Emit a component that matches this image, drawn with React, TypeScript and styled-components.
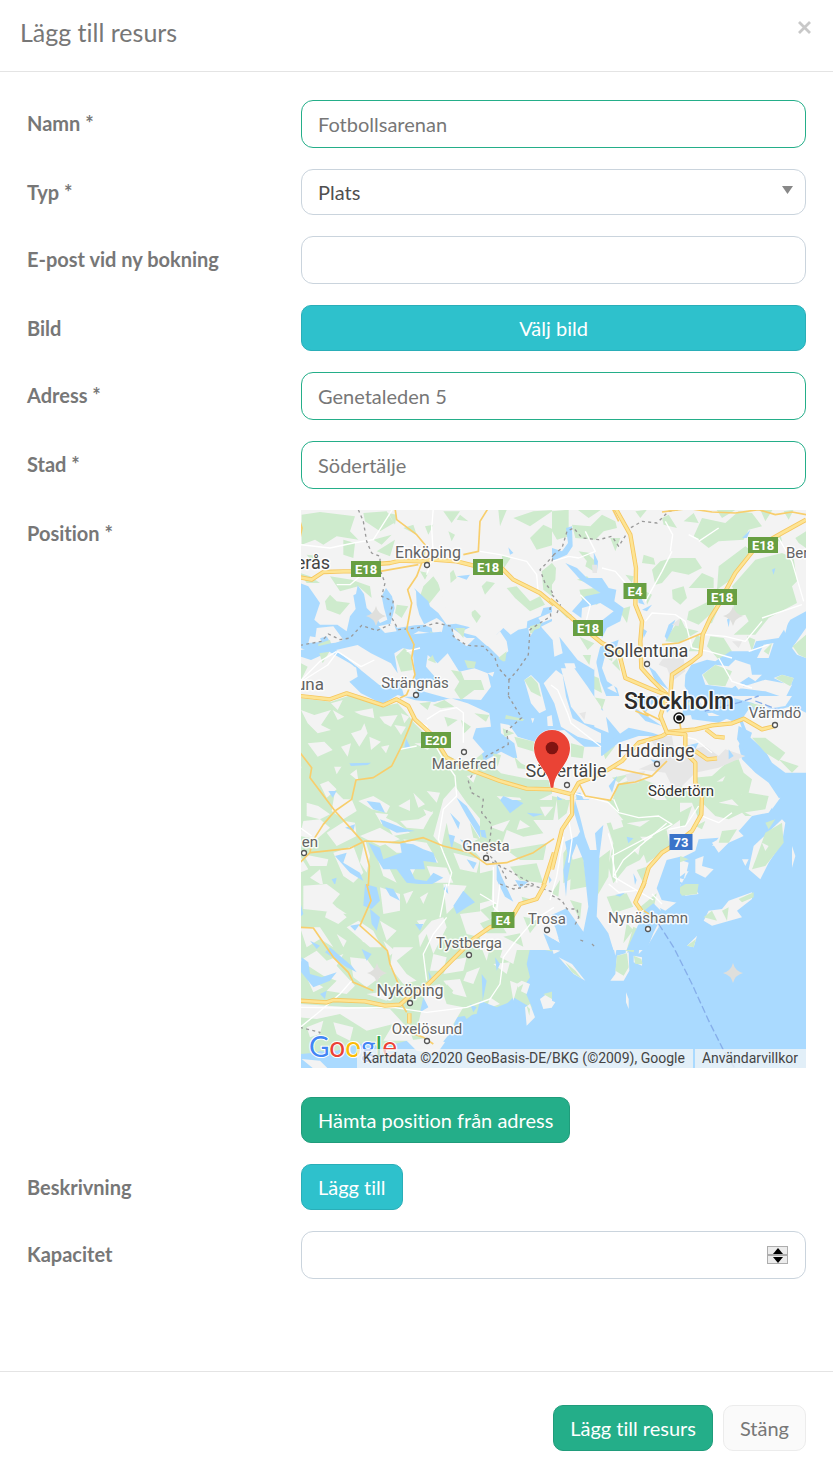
import React, { useState } from 'react';
import styled, { createGlobalStyle, css } from 'styled-components';

const GlobalStyle = createGlobalStyle`
  *, *::before, *::after { box-sizing: border-box; }
  body {
    margin: 0;
    background: #fff;
    color: #777;
    font-family: Lato, "Liberation Sans", sans-serif;
    font-size: 20px;
    font-variant-ligatures: none;
    line-height: 28px;
  }
`;

const Dialog = styled.form`
  display: flex;
  flex-direction: column;
  background: #fff;
`;

const Header = styled.header`
  display: flex;
  justify-content: space-between;
  align-items: flex-start;
  height: 72px;
  padding: 16px 20px;
  border-bottom: 1px solid #e4e4e4;
`;

const Title = styled.h1`
  margin: 0;
  font-size: 25px;
  font-weight: 400;
  line-height: 32px;
`;

const CloseButton = styled.button`
  display: flex;
  padding: 4px 0;
  border: 0;
  background: none;
  color: #c8c8c8;
  cursor: pointer;
`;

const Body = styled.div`
  display: flex;
  flex-direction: column;
  gap: 21px;
  padding: 28px 27px 92px;
`;

const Row = styled.div`
  display: grid;
  grid-template-columns: minmax(0, 274fr) minmax(0, 505fr);
  align-items: start;
`;

const labelText = css`
  padding-top: 9px;
  font-weight: 700;
`;

const Label = styled.label`
  ${labelText}
`;

const Caption = styled.span`
  ${labelText}
`;

const Control = styled.div`
  position: relative;
  display: flex;
  flex-direction: column;
  align-items: flex-start;
`;

const field = css`
  width: 100%;
  padding: 0 16px 1px;
  border-radius: 12px;
  background: #fff;
  font: inherit;
  font-variant-ligatures: none;
  outline: 0;
`;

const TextInput = styled.input<{ $valid?: boolean }>`
  ${field}
  height: 48px;
  border: 1px solid ${(p) => (p.$valid ? '#24ae89' : '#cad4dd')};
  color: #777;
  appearance: textfield;
  &::-webkit-inner-spin-button { appearance: none; }
`;

const Select = styled.select`
  ${field}
  height: 46px;
  border: 1px solid #cad4dd;
  color: #505050;
  appearance: none;
`;

const SelectArrow = styled.svg`
  position: absolute;
  top: 17px;
  right: 13px;
  pointer-events: none;
`;

const tones = {
  green: { background: '#24ae89', border: '#209c7b', color: '#fff' },
  cyan: { background: '#2ec1cc', border: '#2aaeb8', color: '#fff' },
  plain: { background: '#fafafa', border: '#ececec', color: '#777' },
};

const Button = styled.button<{ $tone: keyof typeof tones; $block?: boolean }>`
  width: ${(p) => (p.$block ? '100%' : 'auto')};
  height: 46px;
  padding: 0 16px 1px;
  border: 1px solid ${(p) => tones[p.$tone].border};
  border-radius: 10px;
  background: ${(p) => tones[p.$tone].background};
  color: ${(p) => tones[p.$tone].color};
  font: inherit;
  font-variant-ligatures: none;
  white-space: nowrap;
  cursor: pointer;
`;

const Stepper = styled.div`
  position: absolute;
  top: 15px;
  right: 18px;
  display: flex;
  flex-direction: column;
  width: 21px;
`;

const StepButton = styled.button`
  display: flex;
  justify-content: center;
  align-items: center;
  height: 9px;
  padding: 0;
  border: 1px solid #adadad;
  background: #ececec;
`;

const Footer = styled.footer`
  display: flex;
  justify-content: flex-end;
  gap: 10px;
  padding: 33px 27px 23px;
  border-top: 1px solid #e4e4e4;
`;

const MapFrame = styled.div`
  position: relative;
  width: 100%;
  height: 558px;
  margin-bottom: 29px;
  overflow: hidden;
  background: #aadaff;
`;

const MapCanvas = styled.svg`
  display: block;
  width: 100%;
  height: 100%;
  font-family: Roboto, sans-serif;
`;

const Attribution = styled.div`
  position: absolute;
  right: 0;
  bottom: 0;
  display: flex;
  gap: 2px;
  color: #444;
  font-family: Roboto, sans-serif;
  font-size: 14px;
  line-height: 19px;
  white-space: nowrap;
`;

const Credit = styled.span`
  padding: 0 8px 0 6px;
  background: rgba(245, 245, 245, 0.74);
`;

const TermsLink = styled.a`
  padding: 0 8px 0 7px;
  background: rgba(245, 245, 245, 0.74);
  color: inherit;
  text-decoration: none;
`;

/* ---- Map geometry: every sheet is drawn in units of a third of a pixel ---- */

type Kind = 'water' | 'land' | 'green' | 'urban';
type Line = 'major' | 'minor' | 'street' | 'border' | 'ferry';
interface Sheet {
  x: number;
  y: number;
  areas: [Kind, string][];
  lines: [Line, string][];
}

const fills: Record<Kind, string> = {
  water: '#aadaff',
  land: '#f3f3f3',
  green: '#ceebcd',
  urban: '#e6e6e6',
};

const sheets: Sheet[] = [
  {
    x: -1,
    y: -2,
    areas: [
      ['land', 'M0 0H762V575H0z'],
      ['green', 'M5 20 60 12 165 25 150 70 175 95 110 85 70 110 45 95 5 110z M190 15 260 10 282 45 240 70 195 40z M130 95 165 105 160 150 130 140z M230 130 285 95 270 145z M220 95 275 80 245 110z M265 15 290 20 285 50z M430 10 480 10 455 45z M375 55 400 50 385 80z M445 70 465 80 455 100z M480 20 505 40 470 35z M595 6 620 6 600 55z M640 30 700 10 762 6 690 55z M690 90 730 50 762 65 762 110 710 125z M605 140 632 150 612 180z M545 235 560 220 585 225 555 260z M510 315 525 305 543 325 530 345z M450 195 460 185 470 210 452 225z M360 190 385 195 375 215z M370 235 400 205 425 240 385 290 355 280z M440 240 460 250 455 275z M290 290 325 295 305 330 285 315z M90 205 155 215 210 235 215 270 175 235 120 250z M0 195 30 205 60 225 20 225z M75 280 90 260 110 280 150 285 120 320 80 305z M620 240 650 235 690 280 720 265 735 290 690 310 645 270z M725 190 762 160 762 270 730 245z M20 140 60 145 40 165z M310 60 340 50 350 80z'],
      ['water', 'M0 225 25 235 60 285 43 335 60 350 112 350 140 370 150 325 167 303 160 262 168 258 173 232 192 258 200 300 225 325 240 345 262 335 252 300 245 265 258 240 276 265 284 300 272 345 293 360 345 352 373 350 358 320 350 290 348 250 342 240 385 280 390 295 415 315 440 350 468 347 510 358 480 372 527 384 560 413 590 420 598 400 590 380 610 360 632 380 655 365 680 360 682 340 722 323 730 300 762 295 768 575 620 575 250 575 200 500 60 440 0 420z M470 205 510 200 500 215z M625 118 640 135 630 140z'],
      ['land', 'M50 360 100 355 130 395 95 410 80 385 45 395z M30 385 60 390 65 402 25 405z M235 355 280 345 290 370 255 375z M330 385 355 370 390 375 395 410 380 435 350 430z M370 350 410 330 432 345 420 395 400 390 395 360z M455 360 500 390 525 390 500 415 465 390z M410 210 455 230 500 265 515 310 515 340 480 340 440 310z M685 360 720 355 715 375 690 395z M715 330 762 310 762 330 725 345z M600 370 620 400 625 430 600 450 560 410z'],
      ['green', 'M55 408 90 395 98 430 55 440z M130 405 160 400 155 420z M390 370 415 380 400 400z M465 360 495 360 490 390z M595 450 620 430 615 465z M690 355 725 345 710 380 690 375z'],
    ],
    lines: [
      ['border', 'M175 5 190 40 200 100 215 135 240 145 240 185 255 225 245 265 280 280 270 320 295 365 350 360 410 345 455 355 460 385 500 412 550 415 585 450 595 480 627 515 650 490 685 440 690 365 720 345 752 325 750 300 762 295'],
      ['border', 'M0 412 65 400 85 378 120 395 150 390 185 352 230 368 270 350'],
      ['border', 'M762 140 740 165 720 185 735 225 755 250 762 265 M627 515 625 570'],
      ['street', 'M0 110 90 120 160 105 220 95 280 0 M400 0 395 60 400 140 380 200 M540 130 600 140 680 160 710 200 715 260 M240 190 180 205 150 230 110 230 M320 430 360 420 M110 430 60 460 0 520'],
      ['minor', 'M285 0 290 35 350 80 375 110 372 150 M565 0 540 40 535 130 490 140 M240 190 355 170 M365 165 350 205 323 245 335 285 320 365 342 410 335 450 345 500 320 560 300 570 M0 90 6 60 0 40'],
      ['major', 'M0 208 35 215 70 192 130 190 170 190 230 168 270 165 300 158 360 160 400 155 470 160 530 175 600 175 640 215 720 255 762 290'],
    ],
  },
  {
    x: 251,
    y: -2,
    areas: [
      ['land', 'M0 0H768V575H0z'],
      ['green', 'M0 10 50 5 50 85 15 95 0 70z M60 50 115 55 150 20 190 40 195 60 155 70 130 95 70 90z M70 0 155 0 110 30z M175 90 205 90 190 130z M0 165 12 180 10 215 0 230z M80 130 115 135 105 160z M110 140 130 160 125 190 100 175z M75 215 105 205 140 240 110 225z M220 200 245 205 240 225z M82 245 130 240 155 265 135 290 90 275z M330 30 350 20 375 60 335 50z M395 40 425 15 440 45z M250 10 285 5 265 30z M425 85 450 30 520 45 560 10 600 15 630 55 590 65 575 95 500 100 470 120z M490 0 560 0 510 30z M625 5 665 0 640 40z M275 140 305 150 310 170 270 165z M300 185 325 160 360 150 430 150 450 180 410 200 360 190 330 225 310 230z M410 240 450 195 485 210 485 240z M360 245 395 235 405 270 385 290 362 272z M280 250 300 260 285 290z M500 175 580 115 600 130 530 220 495 245z M540 235 610 155 690 135 725 150 735 220 720 235 735 285 650 330 610 380 545 380 590 340 580 320 540 330 550 260z M410 310 450 290 490 270 485 310 440 350 405 335z M350 380 385 330 400 360 440 370 380 405 340 400z M410 430 435 380 450 390 450 430z M460 350 500 300 480 345z M475 385 515 390 540 430 500 455 465 415z M200 305 235 295 225 345z M20 305 60 320 45 330z M50 500 80 490 78 510z M585 385 610 395 600 430z M695 10 725 5 710 35z M730 90 762 70 762 120 740 105z M660 100 685 75 690 100z'],
      ['water', 'M0 120 30 130 48 105 42 60 60 55 62 115 45 140 0 160z M125 133 138 160 135 190 128 195z M40 165 75 180 105 210 150 210 170 240 193 245 187 280 215 300 205 340 165 360 150 390 140 345 185 310 145 285 90 300 88 330 60 310 100 265 145 255 115 235 85 215z M255 245 278 290 260 285z M270 305 300 290 285 310z M350 350 370 335 360 365 345 395 338 385z M570 90 595 65 585 90z M525 335 535 325 530 358z M0 370 35 370 60 410 80 385 100 420 120 405 135 420 200 395 190 435 160 440 150 480 165 520 195 540 205 575 0 575z M290 475 310 490 350 545 310 520z M398 535 400 500 418 470 465 455 490 460 535 430 600 430 612 400 680 390 715 335 762 310 768 575 420 575z M270 360 285 370 275 390z M660 185 670 180 665 200z'],
      ['land', 'M95 470 130 450 145 520 165 570 110 570 90 520z M165 540 185 530 195 555z M450 500 490 470 530 475 550 455 595 470 600 500 540 540 460 530z M560 540 640 515 720 530 700 570 640 550z M665 510 690 500 725 510 715 535z M635 410 665 405 650 450 615 450z M690 350 710 335 700 375z M720 420 762 360 762 450 735 440z M580 500 630 500 610 520z M540 520 580 530 560 545z'],
      ['green', 'M452 500 490 470 540 490 520 535 470 530z M670 510 690 500 725 510 715 535z M722 415 762 380 762 450 740 440z M115 500 140 510 150 555 120 540z M180 465 195 450 205 490z M165 450 185 430 180 460z M635 430 660 405 650 440z'],
      ['urban', 'M320 470 355 420 395 450 400 490 360 520 345 480z M540 400 570 400 560 420z M360 350 385 330 380 355z M120 170 135 170 135 195 122 195z'],
    ],
    lines: [
      ['street', 'M0 160 50 145 80 150 130 130 100 70 M150 180 190 190 220 225 M360 130 330 190 280 280 M280 340 300 315 370 320 400 340 420 420 470 430 540 450 M340 40 362 80 355 130 M410 80 440 95 M680 90 720 160 755 280 M630 330 750 290 M590 430 650 410 M100 350 115 290 85 260 M460 380 520 385 580 400 630 340 M440 100 500 60 M600 540 540 520 500 450'],
      ['border', 'M0 160 5 140 30 120 45 70 65 60 90 90 140 95 180 85 200 115 235 60 270 40 315 45 350 10 400 0 M0 260 25 290 15 315'],
      ['minor', 'M180 0 200 40 M330 12 420 0 M400 0 480 12 550 15 620 5 670 20 720 12 762 20 M330 410 380 405 452 375'],
      ['major', 'M190 0 235 80 252 180 250 290 270 340 265 400 268 480 300 515 345 560'],
      ['major', 'M-6 275 30 305 70 340 100 365 150 405 200 430 220 510 290 540 345 562'],
      ['major', 'M762 35 690 75 610 120 550 195 520 250 500 290 475 330 452 380 445 440 420 460 360 500 355 565'],
    ],
  },
  {
    x: -1,
    y: 186,
    areas: [
      ['green', 'M0 0H768V575H0z'],
      ['land', 'M0 10 60 15 150 5 270 30 340 60 450 0 560 30 550 100 540 160 505 145 480 200 440 180 400 120 340 70 290 40 250 50 180 20 120 40 70 20 20 40z M30 125 75 120 95 150 50 160z M145 155 190 140 205 175 165 190z M205 110 230 130 215 150z M265 190 275 130 290 150 280 180z M65 185 90 175 80 200z M100 205 135 195 110 235z M150 235 170 220 175 255z M120 190 140 170 140 195z M330 140 420 140 400 165 370 150z M60 265 85 255 110 280 80 305z M105 285 130 310 155 310 170 345 130 370 95 345z M20 320 55 330 90 355 60 370 20 360z M0 175 10 190 0 230z M175 315 220 300 270 330 260 350 215 340z M225 350 265 355 245 385z M380 285 420 290 410 320z M340 290 375 325 355 335z M295 330 330 310 330 345z M370 340 400 350 385 370z M300 375 355 370 400 345 370 400 320 395z M400 420 430 310 465 270 500 320 550 380 555 420 490 450 450 430 440 380 425 450z M245 360 290 380 330 410 280 420z M180 420 240 395 300 430 240 450z M10 375 60 370 90 395 50 430 0 420z M80 410 135 375 165 380 170 420 110 450z M195 430 210 480 200 530 180 500z M10 475 85 490 80 510 30 510z M100 470 160 450 190 530 160 560 130 540z M0 480 25 520 0 530z M250 440 310 445 340 470 290 470z M310 430 380 440 415 500 350 490z M230 480 260 500 290 560 250 540z M320 490 350 510 330 550z M380 510 440 515 460 560 400 560z M460 470 540 490 530 530 480 520z M500 440 620 430 640 460 590 510 545 490z M560 510 620 500 640 545 700 540 720 500 740 570 560 570z M610 330 640 340 600 370z M560 180 620 190 650 150 720 160 762 170 762 230 690 225 640 215z M590 300 660 305 680 335 640 350z M640 350 700 330 690 370z M700 320 762 290 762 320z M655 375 710 370 690 400z M700 425 762 390 762 425 720 450z M640 400 650 430 620 415z M700 455 762 440 720 480z M30 545 60 520 70 570z M120 395 140 390 130 410z M460 350 500 360 480 410z M500 240 530 235 520 260z'],
      ['water', 'M540 0 540 30 570 50 575 90 600 110 610 150 590 170 605 180 660 140 690 150 705 120 762 60 762 0z M545 160 600 190 640 200 590 210 550 195z M85 285 110 285 98 305z M150 205 215 200 205 208 160 210z M325 105 322 155 315 140z M200 315 240 320 255 350 220 340z M240 370 320 400 345 405 290 410 250 390z M470 305 500 330 545 400 560 440 540 425 500 360z M450 350 480 380 475 400z M445 415 465 420 455 460z M575 345 610 300 680 330 640 335 600 320 590 345 650 350 620 370z M205 440 240 455 250 490 305 470 300 440 340 445 370 460 400 470 410 500 370 495 375 520 330 520 345 550 380 555 400 530 430 545 390 568 320 560 290 520 250 520 225 480z M105 480 140 470 130 500 180 530 190 555 150 530z M135 395 165 385 160 405z M95 550 110 545 105 568z M480 430 505 440 500 460z M500 490 530 500 520 520z M670 345 690 345 680 365z M745 280 762 275 762 295z'],
      ['green', 'M550 190 600 215 580 225z M510 380 540 430 520 425z M680 175 720 180 700 210z'],
    ],
    lines: [
      ['street', 'M345 70 380 90 390 120 430 190 465 240 470 300 430 340 415 430 430 470 455 530 445 570 M300 160 350 150 M380 70 420 45 470 35 490 50 490 140 M0 395 35 420'],
      ['border', 'M625 0 665 65 620 105 625 145 560 180 525 225 505 255 515 290 550 310 545 350 575 385 570 430 560 470 600 510 620 550 M560 490 620 520 700 565 640 568'],
      ['minor', 'M0 170 35 215 30 245 105 345 155 310 168 252 220 245 275 210 305 150 330 90 340 60 M105 345 70 385 35 440 30 470 60 467 150 457 195 435 300 440 370 425 430 450 510 470 560 505 620 500 700 470 762 428 M105 345 155 400 190 440 208 510 205 570 M30 470 0 500'],
      ['major', 'M0 0 90 10 140 -8 250 28 290 10 325 30 345 70 400 120 440 185 520 225 600 255 680 278 762 280'],
      ['major', 'M762 470 730 570'],
    ],
  },
  {
    x: 251,
    y: 186,
    areas: [
      ['water', 'M0 0H768V575H0z'],
      ['land', 'M0 100 40 100 110 170 180 160 210 120 160 60 140 10 100 0 240 0 280 50 320 0 400 0 390 60 480 50 540 75 560 70 575 110 560 150 570 190 610 230 650 260 680 305 650 350 600 360 565 400 520 440 480 450 500 425 440 430 430 465 380 490 410 500 400 545 360 545 330 575 150 575 140 510 145 440 130 380 140 340 110 310 70 310 95 370 85 420 60 520 65 575 0 575z M20 0 100 0 160 50 170 110 120 90z M570 70 590 40 650 50 720 30 762 50 762 230 700 230 660 200 640 165 590 120z M520 0 720 0 700 30 640 40 600 20z M440 10 500 20 460 50z M690 370 700 380 690 440 650 500 625 550 590 520 605 450z M720 450 730 480 720 515z M480 440 555 400 575 420 530 440 500 470z M430 490 455 480 450 510 485 520 460 545 430 530z M355 540 410 525 390 560z M665 310 685 305 660 340z M570 490 590 490 580 510z M540 200 560 185 570 220z M250 60 320 65 300 90 240 90z'],
      ['green', 'M195 265 260 245 310 265 290 300 350 330 345 370 420 330 400 390 350 410 330 380 300 450 270 470 265 520 230 560 225 500 160 480 150 440 130 390 180 370 140 340 180 320z M380 250 480 240 530 195 560 190 575 230 600 250 590 290 650 300 640 340 570 350 530 370 490 360 450 320 440 370 420 320 350 320 330 290z M600 125 640 125 700 170 680 195 640 170z M680 190 740 210 720 230z M0 300 40 310 40 350 0 400z M70 300 100 340 160 370 115 390 90 360z M690 380 695 440 640 510 600 520 615 480 640 410z M510 405 555 400 530 440 500 440z M30 160 70 150 65 180 30 175z M150 160 190 150 160 190z M180 245 230 235 200 260z M100 0 160 10 150 40z M400 20 440 15 430 40z M430 390 460 375 450 400z M385 480 410 490 380 500z M590 20 640 30 610 40z M640 380 670 370 650 400z M560 340 600 360 580 360z'],
      ['land', 'M195 345 230 325 215 350z M260 330 290 310 275 350z M380 260 420 230 440 300 410 290z M550 280 570 295 550 305z M490 260 520 240 510 260z M580 210 600 220 590 235z M500 320 540 310 560 330z M630 440 650 450 640 465z'],
      ['urban', 'M260 220 350 180 460 150 500 180 520 160 580 180 500 215 430 230 370 290 340 230z M290 120 360 120 370 180 320 170z M220 235 280 225 260 260 230 265z'],
      ['water', 'M120 165 150 140 180 130 230 95 300 110 330 120 260 120 200 140 150 180z M230 20 270 50 330 90 280 75z M340 30 355 40 345 50z M415 50 460 40 470 60 540 60 500 80 420 70z M560 90 600 110 580 170 555 130z M295 190 325 195 310 205z M400 150 440 140 430 160z M170 270 195 240 180 290z M15 300 30 310 20 340z M40 180 80 190 60 200z M640 30 700 50 690 60z M380 545 400 530 395 550z M530 160 545 180 530 190z M70 290 85 290 110 340 80 330z'],
      ['green', 'M460 258 550 255 580 280 560 310 500 300 450 290z'],
    ],
    lines: [
      ['street', 'M60 290 170 320 200 350 260 365 320 360 360 385 180 480 195 560 M200 345 185 310 M440 330 400 390 350 400 M60 300 50 370 60 430 50 500 M390 180 350 160 M450 360 500 380 540 350 M390 120 430 130 480 170'],
      ['ferry', 'M415 0 460 45 560 20 620 0 M610 15 700 50 740 35'],
      ['minor', 'M240 0 280 50 330 75 M180 215 300 240 250 258 200 265 175 313 100 300 80 260 M300 240 345 195 M390 120 380 60 M290 60 250 45'],
      ['major', 'M0 280 60 295 80 260 120 245 170 220 210 195 260 140 330 120 350 108 430 100 480 88 540 82 575 68 630 100 670 90'],
      ['major', 'M345 0 325 60 345 110 400 115 400 170 430 200 430 260 450 300 448 355 420 405 370 445 330 470 290 515 272 575'],
      ['major', 'M462 100 490 122 518 125 M430 165 465 190 495 187'],
      ['major', 'M60 295 60 355 30 400 0 520'],
    ],
  },
  {
    x: -1,
    y: 374,
    areas: [
      ['green', 'M0 0H762V370L700 375 640 340 610 370 560 385 470 400 450 460 390 500 320 470 250 490 180 480 110 500 0 510z'],
      ['land', 'M10 5 80 0 120 30 95 60 140 90 60 80 10 75z M90 50 140 100 115 120 75 100z M0 130 60 130 100 190 60 165 20 190z M140 130 175 110 220 140 245 190 210 190z M110 150 140 170 130 190z M0 230 50 200 80 230 130 210 110 245 165 305 140 330 80 320 110 290 70 275z M0 360 150 370 270 375 330 440 340 470 250 470 280 420 200 440 120 390 50 405 0 400z M280 190 340 190 290 230 320 270 350 290 310 300 270 250z M150 220 200 225 240 280 200 310 160 280z M240 10 300 30 300 80 250 90z M240 110 290 140 260 170z M355 155 395 110 430 100 440 130 400 210 380 150 360 190z M350 110 380 105 365 130z M430 0 500 5 470 60 440 90z M480 90 555 80 580 30 550 10 640 0 640 70 590 100 540 160 500 150z M360 40 385 25 370 60z M310 30 340 20 320 60z M400 210 440 220 430 260 390 260z M450 230 500 220 490 260 430 270z M430 290 480 285 500 340 460 330z M380 310 420 300 440 360 490 370 460 420 490 470 410 510 350 440z M540 180 570 190 560 230z M590 150 640 130 690 150 620 200z M650 100 720 60 762 90 762 170 690 160z M610 190 655 180 640 240 600 220z M580 240 630 235 620 270z M630 290 655 300 640 350z M570 340 600 360 560 375z M20 430 70 410 60 450 30 460z M100 415 160 430 150 470 110 450z M170 150 210 160 190 175z M250 170 285 200 270 215z M500 265 540 250 520 300 490 290z M200 330 270 320 260 350z M20 280 70 310 40 325z M60 30 90 20 70 55z M680 20 762 30 762 60 720 80 640 60z'],
      ['water', 'M695 170 720 195 768 205 768 575 330 575 300 520 270 480 330 490 400 510 440 460 490 410 530 390 540 350 590 370 640 350 655 370 700 380 670 310 690 280 680 240z M5 220 25 235 30 270 65 280 110 265 90 290 40 310 0 260z M75 205 90 190 155 245 170 265 140 250z M195 0 230 10 240 50 215 75 190 65z M210 75 240 100 230 140 215 120z M255 10 280 15 300 50 270 35z M460 65 490 20 525 55 500 70 470 90z M345 120 370 120 360 140z M430 15 440 0 445 30z M590 20 605 40 600 60z M150 125 180 120 165 140z M185 195 215 210 200 230z M0 540 60 500 130 520 230 540 230 575 0 575z M585 220 600 240 590 260z M545 270 560 290 548 350z M370 340 385 370 360 385z M385 260 400 290 390 300z M510 360 530 370 520 385z M0 50 10 90 0 100z M30 170 60 185 50 195z M60 330 80 320 75 345z'],
      ['land', 'M650 300 665 290 690 300 680 330 660 320z M675 370 690 360 705 400 680 425z M720 345 740 330 765 345 765 370 730 375z M320 470 400 460 435 475 410 510 350 500z M5 525 60 530 100 570 60 570z'],
      ['green', 'M730 330 765 320 765 350z M680 365 690 375 688 395z M440 300 460 320 445 340z M655 310 670 300 660 330z M490 390 520 390 500 405z'],
    ],
    lines: [
      ['street', 'M0 370 140 372 280 370 380 385 500 370 570 345 600 300 610 220 640 180 700 110 762 70 M380 290 370 210 400 150 440 100 M155 290 120 330 50 390 0 430 M440 0 420 100 M600 0 590 80 M590 60 540 30'],
      ['border', 'M0 430 60 445 40 470 M600 0 640 15 700 5 762 25'],
      ['minor', 'M0 130 40 132 100 220 145 265 160 295 220 320 M200 0 213 50 180 125 225 165 262 200 270 240 295 300 M305 360 320 385 M325 445 370 460 400 480'],
      ['major', 'M0 350 80 355 100 348 195 352 255 365 300 362 330 335 385 300 450 235 520 165 570 130 630 110 660 60 710 45 735 0'],
      ['major', 'M328 388 328 418'],
    ],
  },
  {
    x: 251,
    y: 374,
    areas: [
      ['water', 'M0 0H768V575H0z'],
      ['land', 'M0 0 95 0 105 60 80 95 95 140 50 100 30 0 0 40z M0 50 40 60 45 90 0 110z M0 130 40 130 40 160 0 165z M150 0 385 0 380 50 340 80 320 70 320 130 290 180 260 210 270 120 245 170 220 215 225 170 205 130 190 215 180 170 160 180 150 120 130 85 150 40z M390 20 420 0 440 30 400 35z M195 215 230 205 232 260 215 290 175 290 190 270z M245 215 270 220 270 245 245 235z M290 170 310 125 300 165z M20 220 60 240 100 290 65 270z M222 325 230 345 230 375 222 355z M0 195 25 200 5 210z M455 110 470 80 510 75 530 50 600 25 600 45 555 80 570 100 480 125z M405 185 435 155 425 190z M0 350 10 355 0 370z'],
      ['green', 'M65 30 90 15 102 60 75 90z M150 30 190 15 215 70 190 100 145 60z M225 120 260 120 245 205 220 200z M195 215 225 208 230 250 215 275 190 260z M158 130 172 150 165 175z M245 215 268 225 272 240 250 240z M40 235 70 260 90 285 60 265z M455 100 480 80 495 110z M510 80 530 70 525 110z M560 45 605 25 605 40 570 55z M405 185 432 165 425 190z M375 15 400 0 440 0 435 30 390 35z M205 70 240 70 230 85z M290 30 310 15 305 50z M0 0 20 0 10 20z'],
      ['urban', 'M320 110 335 115 322 128 312 118z'],
    ],
    lines: [
      ['street', 'M170 0 200 25 250 20 M300 30 330 60'],
      ['border', 'M0 35 30 50 45 75 75 75 80 100 65 130 M85 168 95 172 M120 180 130 190'],
      ['ferry', 'M320 120 365 190 420 300 470 410 515 500 550 555'],
      ['major', 'M278 -6 250 55 268 80'],
      ['minor', 'M275 80 290 90 300 115'],
    ],
  },
  /* Lake Mälaren between Strängnäs and Södertälje */
  {
    x: 0,
    y: 90,
    areas: [
      ['water', 'M0 150 90 130 250 110 420 95 500 145 560 170 600 185 640 180 700 90 760 70 830 110 880 150 880 400 820 450 700 470 560 480 480 400 200 300 0 300z'],
      ['land', 'M0 170 30 180 85 155 165 200 170 230 145 245 180 280 240 310 0 320z M105 150 170 135 210 160 270 190 300 235 270 260 235 255z M280 160 305 145 335 150 342 230 345 290 310 290 290 220z M380 165 410 190 440 160 475 215 520 205 560 220 570 260 540 300 440 295 370 275 360 250 410 240 375 200z M0 280 170 290 240 315 290 285 340 300 400 305 450 295 500 310 565 340 570 380 525 385 515 415 550 455 520 480 0 480z'],
      ['green', 'M0 295 90 305 150 285 240 320 290 310 325 350 340 370 430 460 500 500 0 500z M285 170 310 145 330 165 335 210 300 215z M380 180 395 165 405 190z M450 210 480 215 490 240 540 240 550 270 520 270 480 300 460 270 475 245z M490 180 525 185 520 205 500 205z M520 340 565 345 555 365z M395 315 430 300 460 320 420 325z M480 360 510 380 490 400z M355 310 390 305 380 330z M55 160 85 155 65 190z M0 190 20 200 0 240z M430 350 470 360 440 380z'],
      ['land', 'M0 330 40 345 90 330 60 375 90 390 50 400 20 370z M90 310 125 300 110 330z M160 335 215 325 220 355 180 345z M235 350 290 345 270 380 250 370z M180 390 190 370 200 400 175 440 150 400z M20 430 70 425 95 450 50 470z M205 410 240 425 210 450z M280 375 315 380 300 405z M95 330 130 350 110 360z M120 440 150 430 140 470z M300 340 325 350 310 370z M340 430 400 430 380 450z M240 440 265 435 255 460z'],
      ['land', 'M555 480 600 455 650 480 640 430 600 400 598 370 625 375 650 410 700 425 740 470 800 440 840 480 840 540 700 540 600 520z M670 240 690 225 715 250 735 330 715 340 690 310z M728 250 765 210 785 225 795 290 815 355 870 385 900 400 900 430 830 410 780 380 760 310z M780 205 820 205 860 260 900 320 900 380 850 370 810 320z M720 80 760 60 900 130 880 210 830 180 775 110 785 160 760 170 755 120z M738 350 752 345 756 378 740 378z M690 355 700 355 695 370z M560 220 580 215 575 230z M790 190 820 190 825 205 795 205z M735 395 790 390 850 440 900 440 900 480 830 470z'],
      ['green', 'M670 240 690 228 710 250 720 290 690 275z M605 385 640 400 610 410z M640 410 700 425 700 455 650 440z M615 345 670 358 665 363 612 356z M835 110 880 130 860 150z M845 165 870 165 865 195z M575 460 600 465 590 500z M640 470 660 490 700 510 650 505z M810 430 850 440 845 475 810 470z'],
      ['water', 'M145 490 210 488 200 495 150 498z M315 415 330 445 310 445z M340 300 400 290 440 295 400 305z M105 152 180 210 160 200z'],
      ['urban', 'M835 340 855 335 850 360z'],
    ],
    lines: [['street', 'M0 245 80 195 110 155 180 200 220 180 M750 255 770 270 800 340 810 370 900 440']],
  },
  /* Coast between Trosa and Nynäshamn */
  {
    x: 179,
    y: 290,
    areas: [
      ['land', 'M0 0H600V180L560 230 530 290 545 340 500 400 460 380 440 450 400 450 380 400 350 350 310 400 260 330 215 350 240 430 190 400 220 450 0 450z'],
      ['green', 'M0 130 0 0H230L220 60 160 60 190 100 130 110 80 90 60 150z M80 150 200 130 190 180 120 180z M90 200 170 190 190 250 120 240z M0 220 40 210 35 300 0 310z M0 330 50 310 30 360z M125 290 160 300 130 310z M250 160 270 130 285 230 250 250z M275 180 310 170 320 260 270 270z M270 300 305 310 300 360z M350 180 390 150 385 230 350 290z M380 0H600V60L530 110 480 180 440 200 400 250 385 200 400 130 380 70 430 60z M480 130 560 90 570 140 500 190z M470 210 500 200 490 250z M380 290 440 280 460 320 400 340z M470 330 530 280 520 330z M440 370 460 390 430 430z M215 280 240 240 235 290z M230 0 270 0 260 40 235 60z M130 350 180 360 150 400z M0 370 50 350 80 400 20 400z M70 410 120 400 130 440z'],
      ['land', 'M390 60 420 50 430 80 400 90z M440 70 510 60 480 80z M480 110 520 110 495 125z M30 80 90 60 70 95z M120 60 150 80 110 90z M460 150 480 140 475 165z M410 260 450 240 440 270z M180 20 220 20 195 50z'],
      ['water', 'M285 0 300 50 315 110 330 150 350 150 345 100 370 75 358 170 355 260 350 350 385 400 400 450 210 450 190 400 240 430 215 345 260 325 310 395 325 320 310 180 285 120 300 95 280 30z M255 125 300 105 275 170 262 240 258 290 250 210 262 160z M50 190 65 230 100 305 75 290 50 240z M105 240 145 245 120 265z M60 0 90 40 130 10 110 0z M0 90 15 90 20 115 5 110z M140 38 190 42 160 50z M560 180 600 170 600 310 545 300 530 265z M440 110 460 115 445 130z M460 220 470 240 465 255z M405 285 435 278 420 290z M495 330 520 310 550 340 520 400 500 450 440 450z M205 225 215 240 208 250z'],
    ],
    lines: [['street', 'M385 100 400 150 400 230 460 265 520 300 M400 230 430 180 560 70 M250 110 230 230 210 300 M40 200 40 320 60 340']],
  },
];

const lineStyles: Record<Line, React.SVGProps<SVGPathElement>> = {
  street: { stroke: '#fff', strokeWidth: 4 },
  border: { stroke: '#9a9a9a', strokeWidth: 4, strokeDasharray: '9 10' },
  ferry: { stroke: '#86aeea', strokeWidth: 4, strokeDasharray: '22 9' },
  minor: { stroke: '#f8ce6c', strokeWidth: 5 },
  major: { stroke: '#f6c75f', strokeWidth: 13 },
};

const lineOrder: Line[] = ['street', 'border', 'ferry', 'minor', 'major'];

interface Place {
  name: string;
  x: number;
  y: number;
  size: number;
  color?: string;
  weight?: number;
  anchor?: 'start' | 'middle' | 'end';
  dot?: [number, number];
}

const places: Place[] = [
  { name: 'Enköping', x: 127, y: 48, size: 16, dot: [126, 55] },
  { name: 'erås', x: 29, y: 59, size: 18, anchor: 'end', color: '#444' },
  { name: 'una', x: 23, y: 180, size: 17, anchor: 'end' },
  { name: 'Strängnäs', x: 114, y: 178, size: 15, dot: [115, 185] },
  { name: 'Mariefred', x: 163, y: 259, size: 15, dot: [163, 242] },
  { name: 'Gnesta', x: 185, y: 341, size: 15, dot: [185, 348] },
  { name: 'en', x: 17, y: 337, size: 15, anchor: 'end', dot: [3, 343] },
  { name: 'Trosa', x: 246, y: 414, size: 15, dot: [246, 420] },
  { name: 'Tystberga', x: 168, y: 438, size: 15, dot: [168, 445] },
  { name: 'Nyköping', x: 109, y: 486, size: 16, dot: [109, 493] },
  { name: 'Oxelösund', x: 126, y: 524, size: 15, dot: [126, 531] },
  { name: 'Nynäshamn', x: 347, y: 413, size: 15, dot: [347, 419] },
  { name: 'Sollentuna', x: 345, y: 147, size: 18, color: '#444', dot: [346, 154] },
  { name: 'Ber', x: 485, y: 48, size: 15, anchor: 'start' },
  { name: 'Värmdö', x: 474, y: 208, size: 15, dot: [474, 215] },
  { name: 'Huddinge', x: 355, y: 247, size: 18, color: '#444', dot: [356, 254] },
  { name: 'Södertälje', x: 265, y: 267, size: 18, color: '#444', dot: [266, 275] },
  { name: 'Södertörn', x: 380, y: 286, size: 15, color: '#333' },
  { name: 'Stockholm', x: 378, y: 199, size: 23, weight: 500, color: '#2c2c2c' },
];

const shields = [
  { name: 'E18', x: 65, y: 59 },
  { name: 'E18', x: 187, y: 57 },
  { name: 'E18', x: 462, y: 35 },
  { name: 'E4', x: 334, y: 81 },
  { name: 'E18', x: 421, y: 87 },
  { name: 'E18', x: 287, y: 118 },
  { name: 'E20', x: 135, y: 230 },
  { name: 'E4', x: 202, y: 410 },
  { name: '73', x: 380, y: 332, color: '#3a73c9' },
];

const sparkles = [
  { x: 75, y: 106 },
  { x: 432, y: 106 },
  { x: 76, y: 463 },
  { x: 432, y: 463 },
];

function PositionMap() {
  return (
    <MapFrame>
      <MapCanvas
        viewBox="0 0 505 558"
        preserveAspectRatio="xMidYMid slice"
        role="img"
        aria-label="Karta med vald position"
      >
        {sheets.map((s) => (
          <g key={`${s.x},${s.y}`} transform={`translate(${s.x} ${s.y}) scale(${1 / 3})`}>
            {s.areas.map(([kind, d], i) => (
              <path key={i} d={d} fill={fills[kind]} />
            ))}
          </g>
        ))}
        {sparkles.map((p) => (
          <path
            key={`${p.x},${p.y}`}
            transform={`translate(${p.x} ${p.y})`}
            d="M0 -10 Q2 -2 10 0 Q2 2 0 10 Q-2 2 -10 0 Q-2 -2 0 -10z"
            fill="#dfdfdc"
          />
        ))}
        {lineOrder.map((kind) =>
          sheets.map((s) => (
            <g
              key={`${kind}${s.x},${s.y}`}
              transform={`translate(${s.x} ${s.y}) scale(${1 / 3})`}
              fill="none"
              strokeLinejoin="round"
            >
              {s.lines
                .filter(([k]) => k === kind)
                .map(([, d], i) => (
                  <g key={i}>
                    <path d={d} {...lineStyles[kind]} />
                    {kind === 'major' && <path d={d} stroke="#fde494" strokeWidth={8} />}
                  </g>
                ))}
            </g>
          )),
        )}
        {shields.map((s) => {
          const w = s.name.length > 2 ? 30 : 23;
          return (
            <g key={`${s.x},${s.y}`}>
              <rect x={s.x - w / 2} y={s.y - 8} width={w} height={16} fill={s.color ?? '#689f42'} />
              <text x={s.x} y={s.y + 5} textAnchor="middle" fontSize={13} fontWeight={700} fill="#fff">
                {s.name}
              </text>
            </g>
          );
        })}
        {places.map((p) => (
          <g key={p.name}>
            {p.dot && (
              <circle cx={p.dot[0]} cy={p.dot[1]} r={2.5} fill="#fff" stroke="#555" strokeWidth={1.3} />
            )}
            <text
              x={p.x}
              y={p.y}
              textAnchor={p.anchor ?? 'middle'}
              fontSize={p.size}
              fontWeight={p.weight ?? 400}
              fill={p.color ?? '#646464'}
              stroke="#fff"
              strokeOpacity={0.85}
              strokeWidth={3}
              strokeLinejoin="round"
              paintOrder="stroke"
            >
              {p.name}
            </text>
          </g>
        ))}
        <circle cx={378} cy={208} r={5} fill="#fff" stroke="#111" strokeWidth={1.5} />
        <circle cx={378} cy={208} r={2.8} fill="#111" />
        <path
          d="M249.500 277C249 262 233 254 233 238A18 18 0 0 1 269 238C269 254 253 262 252.500 277Q251 279 249.500 277z"
          fill="#ea4335"
          stroke="#fff"
          strokeWidth={1}
          paintOrder="stroke"
        />
        <circle cx={251} cy={238} r={6.3} fill="#811411" />
        <text
          x={8}
          y={547}
          fontFamily="Lato, sans-serif"
          fontSize={28}
          stroke="#fff"
          strokeWidth={2}
          paintOrder="stroke"
        >
          <tspan fill="#4285f4">G</tspan>
          <tspan fill="#ea4335">o</tspan>
          <tspan fill="#fbbc05">o</tspan>
          <tspan fill="#4285f4">g</tspan>
          <tspan fill="#34a853">l</tspan>
          <tspan fill="#ea4335">e</tspan>
        </text>
      </MapCanvas>
      <Attribution>
        <Credit>Kartdata ©2020 GeoBasis-DE/BKG (©2009), Google</Credit>
        <TermsLink href="#villkor">Användarvillkor</TermsLink>
      </Attribution>
    </MapFrame>
  );
}

export default function App() {
  const [capacity, setCapacity] = useState('');
  const step = (by: number) => setCapacity(String(Math.max(0, Number(capacity) + by)));

  return (
    <>
      <GlobalStyle />
      <Dialog onSubmit={(e) => e.preventDefault()}>
        <Header>
          <Title>Lägg till resurs</Title>
          <CloseButton type="button" aria-label="Stäng dialogrutan">
            <svg width="17" height="16" viewBox="0 0 17 16" aria-hidden="true">
              <path d="M3 2 14 13M14 2 3 13" stroke="currentColor" strokeWidth="2.800" fill="none" />
            </svg>
          </CloseButton>
        </Header>
        <Body>
          <Row>
            <Label htmlFor="name">Namn *</Label>
            <Control>
              <TextInput id="name" $valid defaultValue="Fotbollsarenan" />
            </Control>
          </Row>
          <Row>
            <Label htmlFor="type">Typ *</Label>
            <Control>
              <Select id="type" defaultValue="Plats">
                <option>Plats</option>
              </Select>
              <SelectArrow width="11" height="8" viewBox="0 0 11 8" aria-hidden="true">
                <path d="M0 0H11L5.500 8z" fill="#888" />
              </SelectArrow>
            </Control>
          </Row>
          <Row>
            <Label htmlFor="email">E-post vid ny bokning</Label>
            <Control>
              <TextInput id="email" type="email" />
            </Control>
          </Row>
          <Row>
            <Caption>Bild</Caption>
            <Control>
              <Button type="button" $tone="cyan" $block>Välj bild</Button>
            </Control>
          </Row>
          <Row>
            <Label htmlFor="address">Adress *</Label>
            <Control>
              <TextInput id="address" $valid defaultValue="Genetaleden 5" />
            </Control>
          </Row>
          <Row>
            <Label htmlFor="city">Stad *</Label>
            <Control>
              <TextInput id="city" $valid defaultValue="Södertälje" />
            </Control>
          </Row>
          <Row>
            <Caption>Position *</Caption>
            <Control>
              <PositionMap />
              <Button type="button" $tone="green">Hämta position från adress</Button>
            </Control>
          </Row>
          <Row>
            <Caption>Beskrivning</Caption>
            <Control>
              <Button type="button" $tone="cyan">Lägg till</Button>
            </Control>
          </Row>
          <Row>
            <Label htmlFor="capacity">Kapacitet</Label>
            <Control>
              <TextInput
                id="capacity"
                type="number"
                value={capacity}
                onChange={(e) => setCapacity(e.target.value)}
              />
              <Stepper>
                <StepButton type="button" aria-label="Öka" onClick={() => step(1)}>
                  <svg width="10" height="6" viewBox="0 0 10 6" aria-hidden="true">
                    <path d="M0 6 5 0 10 6z" />
                  </svg>
                </StepButton>
                <StepButton type="button" aria-label="Minska" onClick={() => step(-1)}>
                  <svg width="10" height="6" viewBox="0 0 10 6" aria-hidden="true">
                    <path d="M0 0 5 6 10 0z" />
                  </svg>
                </StepButton>
              </Stepper>
            </Control>
          </Row>
        </Body>
        <Footer>
          <Button type="submit" $tone="green">Lägg till resurs</Button>
          <Button type="button" $tone="plain">Stäng</Button>
        </Footer>
      </Dialog>
    </>
  );
}
